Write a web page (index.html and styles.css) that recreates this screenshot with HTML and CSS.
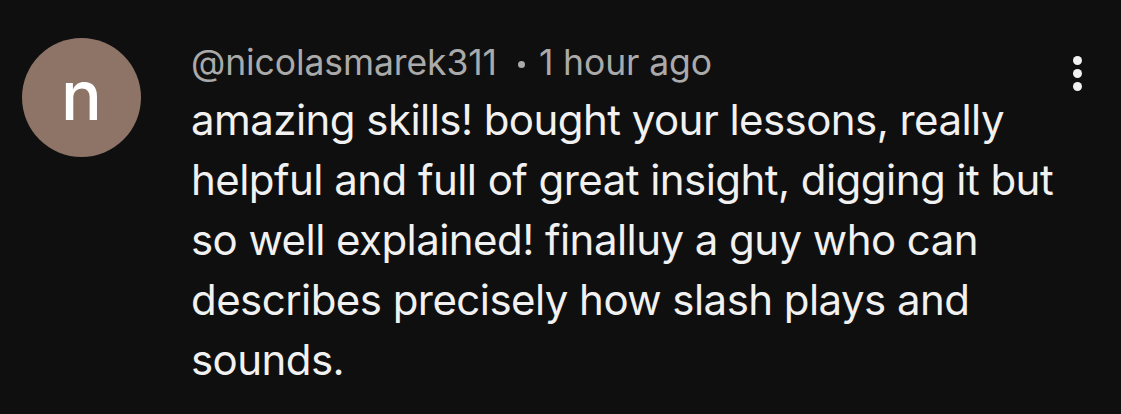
FILE: index.html
```html
<!DOCTYPE html>
<html lang="en">
<head>
<meta charset="utf-8">
<title>Comment</title>
<link rel="stylesheet" href="styles.css">
</head>
<body>
<div class="comment">
  <div class="avatar">n</div>
  <div class="content">
    <div class="meta"><span class="handle">@nicolasmarek311</span><span class="sep"></span><span class="time">1 hour ago</span></div>
    <p class="text">amazing skills! bought your lessons, really<br>helpful and full of great insight, digging it but<br>so well explained! finalluy a guy who can<br>describes precisely how slash plays and<br>sounds.</p>
  </div>
  <button class="more" aria-label="More actions">
    <span class="dot"></span><span class="dot"></span><span class="dot"></span>
  </button>
</div>
</body>
</html>
```

FILE: styles.css
```css
html, body {
  margin: 0;
  padding: 0;
  background: #0f0f0f;
  height: 100%;
  overflow: hidden;
}
body {
  font-family: Inter, "Noto Sans", "Liberation Sans", sans-serif;
  color: #f1f1f1;
}
.comment {
  display: flex;
  align-items: flex-start;
  padding: 38px 0 0 22px;
}
.avatar {
  flex: 0 0 auto;
  width: 119px;
  height: 119px;
  border-radius: 50%;
  background: #8e7367;
  color: #ffffff;
  display: flex;
  align-items: center;
  justify-content: center;
  font-size: 68px;
  font-weight: 500;
  line-height: 1;
  padding-bottom: 6px;
  box-sizing: border-box;
}
.content {
  flex: 1 1 auto;
  margin-left: 50px;
  padding-top: 5px;
}
.meta {
  font-size: 35.5px;
  line-height: 40px;
  color: #aaaaaa;
  display: flex;
  align-items: center;
  letter-spacing: -0.1px;
}
.sep {
  width: 7px;
  height: 7px;
  border-radius: 50%;
  background: #aaaaaa;
  margin: 2px 14px 0 21px;
}
.text {
  margin: 7px 0 0;
  font-size: 42px;
  line-height: 60px;
  letter-spacing: -0.55px;
  color: #f1f1f1;
  white-space: nowrap;
}
.more {
  flex: 0 0 auto;
  margin: 18px 39px 0 0;
  padding: 0;
  border: 0;
  background: transparent;
  display: flex;
  flex-direction: column;
  gap: 4px;
}
.dot {
  width: 9px;
  height: 9px;
  border-radius: 50%;
  background: #f1f1f1;
}
```
